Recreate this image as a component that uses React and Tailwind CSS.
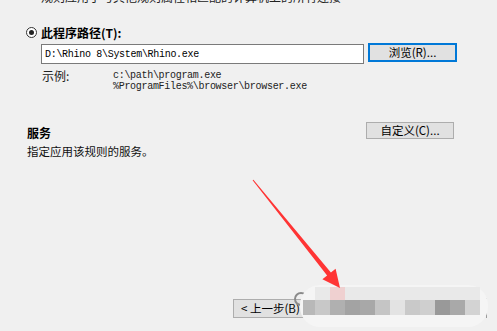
import React from 'react'

const cells = ['#b8b8b8', '#c8c8c8', '#b0b0b0', '#a3a3a3', '#a8a8a8', '#c5c5c5', '#e3e3e3', '#c9c9c9', '#cfcfcf', '#999999', '#a9a9a9', '#d3d3d3']

const App = () => {
  return (
    <div
      className="relative w-[497px] h-[331px] overflow-hidden bg-[#f0f0f0] text-black flex flex-col"
      style={{ fontFamily: '"Noto Sans CJK SC", "Liberation Sans", sans-serif' }}
    >
      {/* cut-off line at the top */}
      <div className="h-[4px] overflow-hidden pl-[41px]">
        <div className="-mt-[10px] text-[12px] leading-[14px] text-[#222] whitespace-nowrap">
          规则应用于与其他规则属性相匹配的计算机上的所有连接
        </div>
      </div>

      {/* radio */}
      <div className="mt-[22px] h-[13px] flex items-center pl-[26px]">
        <div className="w-[11px] h-[11px] rounded-full border border-[#333] bg-white flex items-center justify-center">
          <div className="w-[5px] h-[5px] rounded-full bg-[#222]" />
        </div>
        <span className="ml-[4px] text-[12px] leading-[13px] font-bold">此程序路径(T):</span>
      </div>

      {/* path + browse */}
      <div className="mt-[4px] flex items-start pl-[41px]">
        <div className="w-[323px] h-[20px] mt-[1px] border border-[#7a7a7a] bg-white flex items-center pl-[3px]">
          <span className="text-[10px] tracking-[-0.3px] text-black" style={{ fontFamily: '"Liberation Mono", monospace' }}>
            D:\Rhino 8\System\Rhino.exe
          </span>
        </div>
        <button className="ml-[4px] w-[89px] h-[19px] border border-[#0078d7] outline outline-1 outline-[#0078d7] -outline-offset-2 bg-[#e1e1e1] text-[11.5px] leading-[17px] text-black">
          浏览(R)...
        </button>
      </div>

      {/* examples */}
      <div className="mt-[5px] flex pl-[42px]">
        <span className="w-[71px] text-[12px] leading-[13px] text-[#222]">示例:</span>
        <div className="mt-[1px] text-[10px] leading-[11px] tracking-[-0.3px] text-[#222]" style={{ fontFamily: '"Liberation Mono", monospace' }}>
          <div>c:\path\program.exe</div>
          <div>%ProgramFiles%\browser\browser.exe</div>
        </div>
      </div>

      {/* services */}
      <div className="mt-[30px] flex justify-between items-start pl-[27px] pr-[43px]">
        <span className="mt-[5px] text-[12px] leading-[12px] font-bold">服务</span>
        <button className="w-[88px] h-[17px] border border-[#adadad] bg-[#e1e1e1] text-[11.5px] leading-[15px] text-black">
          自定义(C)...
        </button>
      </div>
      <div className="mt-[6px] pl-[27px] text-[11.5px] leading-[12px] text-[#111]">指定应用该规则的服务。</div>

      {/* bottom buttons */}
      <div className="mt-auto mb-[13px] pl-[233px] flex">
        <button className="w-[80px] h-[19px] border border-[#adadad] bg-[#e1e1e1] text-[11.5px] leading-[17px] text-left pl-[7px] text-black">
          &lt; 上一步(B)
        </button>
      </div>

      {/* mosaic smear over the lower buttons */}
      <div className="absolute left-[294px] top-[292px] w-[14px] h-[14px] rounded-full border-2 border-[#8a8a8a]" />
      <div className="absolute left-[486px] top-[298px] w-[1px] h-[20px] bg-[#9a9a9a]" />
      <div className="absolute left-[300px] top-[285px] w-[188px] h-[42px] rounded-[20px] bg-[#f5f5f5]" />
      <div className="absolute left-[315px] top-[287px] w-[165px] h-[13px] flex">
        <div className="w-[15px] bg-[#e9e9e9]" />
        <div className="w-[15px] bg-[#efd0d0]" />
        <div className="flex-1 bg-[#e9e9e9]" />
      </div>
      <div className="absolute left-[303px] top-[300px] h-[15px] flex">
        {cells.map((c, i) => (
          <div key={i} className={i === 0 ? 'w-[12px] h-full' : 'w-[15px] h-full'} style={{ background: c }} />
        ))}
      </div>

      {/* red arrow */}
      <svg className="absolute inset-0 pointer-events-none" width="497" height="331">
        <polygon
          points="253.4,179.7 330.9,272.4 335.6,268.7 340,288 322.4,279.3 327.1,275.6 252.6,180.3"
          fill="#ff3434"
        />
      </svg>
    </div>
  )
}

export default App
